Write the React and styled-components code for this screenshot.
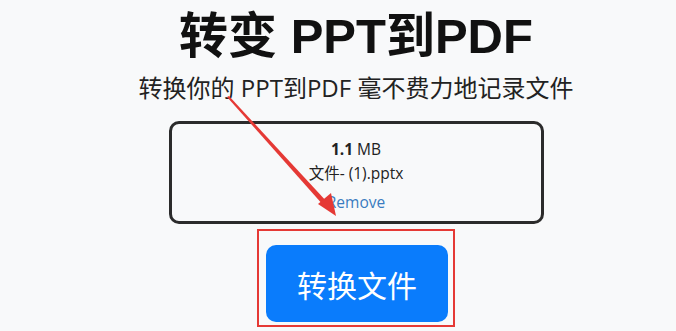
import React from 'react'
import styled, { createGlobalStyle } from 'styled-components'

const Global = createGlobalStyle`
    html, body {
        margin: 0;
        padding: 0;
        background: #f8f9fa;
    }
    body {
        font-family: "Open Sans", "Noto Sans CJK SC", sans-serif;
        color: #212529;
    }
`

const Page = styled.div`
    position: relative;
    box-sizing: border-box;
    width: 676px;
    height: 331px;
    padding-left: 36px;
    overflow: hidden;
    display: flex;
    flex-direction: column;
    align-items: center;
`
const Title = styled.h1`
    margin: 5px 0 0;
    font-family: "Liberation Sans", "Noto Sans CJK SC", sans-serif;
    font-weight: 700;
    font-size: 49px;
    line-height: 62px;
    color: #111;
`
const Sub = styled.p`
    margin: 5px 0 0;
    font-family: "Open Sans", "Noto Sans CJK SC", sans-serif;
    font-size: 24px;
    line-height: 32px;
    color: #222;
`
const FileBox = styled.div`
    box-sizing: border-box;
    margin-top: 17px;
    width: 375px;
    height: 103px;
    border: 3px solid #2b2b2b;
    border-radius: 10px;
    display: flex;
    flex-direction: column;
    align-items: center;
    padding-top: 13px;
    font-size: 15.5px;
    line-height: 24px;
    color: #222;
`
const Size = styled.div`
    b { font-weight: 700; }
`
const Remove = styled.a`
    margin-top: 5px;
    color: #3a7cc0;
    text-decoration: none;
`
const Mark = styled.div`
    box-sizing: border-box;
    margin-top: 5px;
    width: 198px;
    height: 98px;
    border: 2px solid #e53935;
    padding: 14px 0 0 7px;
`
const Button = styled.button`
    width: 182px;
    height: 77px;
    border: none;
    border-radius: 10px;
    background: #0a7cfc;
    color: #fff;
    font-family: "Noto Sans CJK SC", sans-serif;
    font-size: 30px;
    cursor: pointer;
`
const Arrow = styled.svg`
    position: absolute;
    left: 0;
    top: 0;
    pointer-events: none;
`

export default function App() {
    return (
        <Page>
            <Global />
            <Title>转变 PPT到PDF</Title>
            <Sub>转换你的 PPT到PDF 毫不费力地记录文件</Sub>
            <FileBox>
                <Size><b>1.1</b> MB</Size>
                <div>文件- (1).pptx</div>
                <Remove href="#">Remove</Remove>
            </FileBox>
            <Mark>
                <Button>转换文件</Button>
            </Mark>
            <Arrow width="676" height="331" viewBox="0 0 676 331">
                <polygon points="227,97 229,96 328,203 324,206" fill="#e53935" />
                <polygon points="336,216 318,204 331,193" fill="#e53935" />
            </Arrow>
        </Page>
    )
}
